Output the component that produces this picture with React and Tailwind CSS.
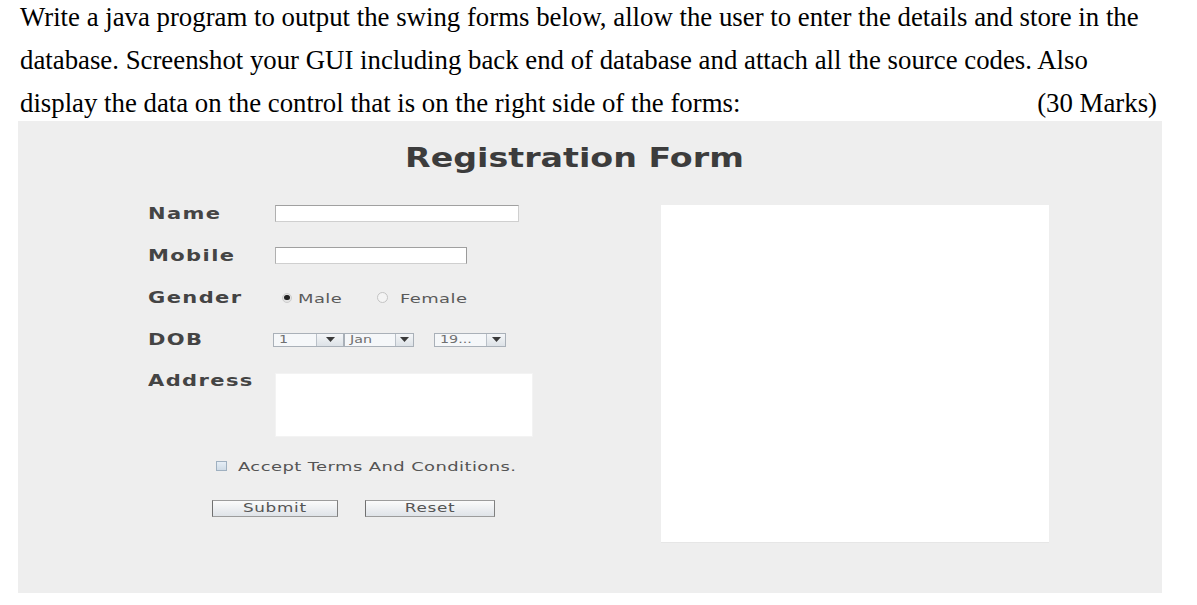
import React from "react";

function Combo({ text, textW, btnW }) {
  return (
    <div className="flex h-[14px] border border-[#a9b0b8] bg-[#f5f7f9]">
      <div className="flex items-center pl-[5px] text-[11px] leading-[12px] text-[#707070]" style={{ width: textW }}>
        <span className="inline-block origin-left scale-x-[1.3]">{text}</span>
      </div>
      <div
        className="flex items-center justify-center border-l border-[#b9c0c8] bg-gradient-to-b from-[#f4f6f8] to-[#dde2e7]"
        style={{ width: btnW }}
      >
        <svg width="9" height="5" viewBox="0 0 9 5">
          <path d="M0 0 L9 0 L4.5 5 Z" fill="#3a3a3a" />
        </svg>
      </div>
    </div>
  );
}

function Label({ children }) {
  return (
    <div className="w-[127px] shrink-0 text-[15px] leading-[16px] font-bold text-[#444] tracking-[1px]">
      <span className="inline-block origin-left scale-x-[1.4]">{children}</span>
    </div>
  );
}

function Small({ children, className = "" }) {
  return (
    <span className={"inline-block origin-left scale-x-[1.38] text-[13px] leading-[14px] tracking-[0.3px] " + className}>
      {children}
    </span>
  );
}

export default function App() {
  return (
    <div className="w-[1197px] h-[605px] bg-white overflow-hidden">
      <div className="pl-[20px] pr-[40px] flex flex-col gap-[9px] font-['Liberation_Serif',serif] text-[26.8px] leading-[34px] text-black">
        <div className="whitespace-nowrap">
          Write a java program to output the swing forms below, allow the user to enter the details and store in the
        </div>
        <div className="whitespace-nowrap">
          database. Screenshot your GUI including back end of database and attach all the source codes. Also
        </div>
        <div className="flex justify-between whitespace-nowrap">
          <span>display the data on the control that is on the right side of the forms:</span>
          <span>(30 Marks)</span>
        </div>
      </div>

      <div className="ml-[18px] mt-[1px] w-[1144px] h-[472px] bg-[#eeeeee] flex flex-col font-['DejaVu_Sans',sans-serif]">
        <div className="pl-[387px] pt-[22px] h-[52px]">
          <div className="text-[26px] leading-[30px] font-bold text-[#3c3c3c]">
            <span className="inline-block origin-left scale-x-[1.28]">Registration Form</span>
          </div>
        </div>

        <div className="flex mt-[32px]">
          <div className="ml-[130px] w-[385px] flex flex-col">
            <div className="flex flex-col gap-[25px]">
              <div className="flex items-center h-[17px]">
                <Label>Name</Label>
                <div className="w-[244px] h-[17px] bg-white border border-[#cfcfcf] border-t-[#a0a0a0] border-l-[#b0b0b0]" />
              </div>
              <div className="flex items-center h-[17px]">
                <Label>Mobile</Label>
                <div className="w-[192px] h-[17px] bg-white border border-[#cfcfcf] border-t-[#a0a0a0] border-l-[#b0b0b0] border-r-[#9a9a9a]" />
              </div>
              <div className="flex items-center h-[17px]">
                <Label>Gender</Label>
                <div className="flex items-center pl-[7px] text-[#5a5a5a]">
                  <div className="w-[10px] h-[10px] rounded-full bg-[#e4e4e4] border border-[#cdcdcd] flex items-center justify-center">
                    <div className="w-[6px] h-[5px] rounded-full bg-[#222]" />
                  </div>
                  <div className="ml-[6px] w-[79px]">
                    <Small>Male</Small>
                  </div>
                  <div className="w-[11px] h-[11px] rounded-full bg-[#f4f4f4] border border-[#c4c4c4]" />
                  <div className="ml-[12px]">
                    <Small>Female</Small>
                  </div>
                </div>
              </div>
              <div className="flex items-center h-[17px]">
                <Label>DOB</Label>
                <div className="flex items-center -ml-[2px]">
                  <Combo text="1" textW={42} btnW={27} />
                  <Combo text="Jan" textW={50} btnW={18} />
                  <div className="ml-[20px]">
                    <Combo text="19..." textW={51} btnW={19} />
                  </div>
                </div>
              </div>
              <div className="flex items-start">
                <Label>Address</Label>
                <div className="w-[258px] h-[64px] bg-white border border-[#f3f3f3]" />
              </div>
            </div>

            <div className="flex items-center h-[14px] mt-[22px] pl-[68px] text-[#555]">
              <div className="w-[11px] h-[10px] border border-[#9fb0c0] bg-gradient-to-b from-[#e6eef6] to-[#cfdbe6]" />
              <div className="ml-[11px]">
                <Small>Accept Terms And Conditions.</Small>
              </div>
            </div>

            <div className="flex mt-[27px] pl-[64px]">
              <div className="w-[126px] h-[17px] border border-[#9c9c9c] border-l-[#707070] border-r-[#808080] bg-gradient-to-b from-[#fbfbfb] to-[#dfe3e8] flex items-center justify-center text-[#555]">
                <span className="inline-block scale-x-[1.4] text-[12px] leading-[13px] tracking-[0.5px]">Submit</span>
              </div>
              <div className="ml-[27px] w-[130px] h-[17px] border border-[#9c9c9c] border-l-[#707070] border-r-[#808080] bg-gradient-to-b from-[#fbfbfb] to-[#dfe3e8] flex items-center justify-center text-[#555]">
                <span className="inline-block scale-x-[1.4] text-[12px] leading-[13px] tracking-[0.5px]">Reset</span>
              </div>
            </div>
          </div>

          <div className="ml-[128px] w-[388px] h-[338px] bg-white border-b border-[#e6e6e6]" />
        </div>
      </div>
    </div>
  );
}
